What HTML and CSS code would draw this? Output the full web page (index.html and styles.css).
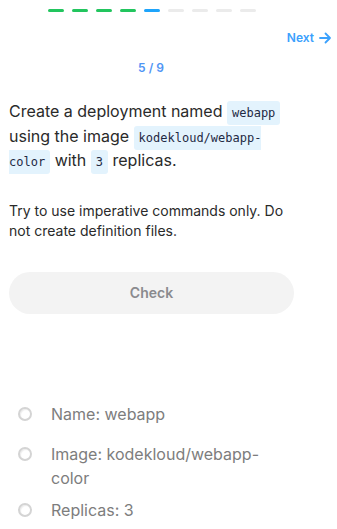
FILE: index.html
```html
<!DOCTYPE html>
<html>
<head>
<meta charset="utf-8">
<link rel="stylesheet" href="styles.css">
</head>
<body>
<div class="page">
  <div class="progress">
    <span class="seg done"></span><span class="seg done"></span><span class="seg done"></span><span class="seg done"></span><span class="seg current"></span><span class="seg"></span><span class="seg"></span><span class="seg"></span><span class="seg"></span>
  </div>
  <div class="nav">
    <a class="next">Next <svg width="14" height="14" viewBox="0 0 14 14"><path d="M2 7h10M7.5 2.5L12 7l-4.5 4.5" fill="none" stroke="currentColor" stroke-width="1.8" stroke-linecap="round" stroke-linejoin="round"/></svg></a>
  </div>
  <div class="main">
    <div class="counter">5 / 9</div>
    <p class="question">Create a deployment named <code>webapp</code> using the image <code>kodekloud/webapp-color</code> with <code>3</code> replicas.</p>
    <p class="hint">Try to use imperative commands only. Do not create definition files.</p>
    <button class="check">Check</button>
    <ul class="tasks">
      <li><span class="radio"></span><span class="label">Name: webapp</span></li>
      <li><span class="radio"></span><span class="label">Image: kodekloud/webapp-color</span></li>
      <li><span class="radio"></span><span class="label">Replicas: 3</span></li>
    </ul>
  </div>
</div>
</body>
</html>
```
FILE: styles.css
```css
* { box-sizing: border-box; }
html, body { margin: 0; padding: 0; background: #fff; }
body { font-family: Inter, "Noto Sans", sans-serif; color: #2b2b2b; }
.page { width: 337px; }
.progress {
  display: flex;
  gap: 8px;
  padding-left: 48px;
  padding-top: 9px;
  height: 12px;
}
.seg { width: 16px; height: 3px; border-radius: 2px; background: #ebebeb; }
.seg.done { background: #22c55e; }
.seg.current { background: #1ea4fb; }
.nav {
  display: flex;
  justify-content: flex-end;
  padding: 16px 5px 0 0;
  height: 35px;
}
.next {
  display: flex;
  align-items: center;
  gap: 4px;
  color: #3ba1fd;
  font-size: 12px;
  font-weight: 600;
}
.main { padding-left: 9px; width: 293px; }
.counter {
  text-align: center;
  color: #4f95f5;
  font-size: 12px;
  font-weight: 600;
  padding-top: 13px;
  height: 52px;
}
.question {
  margin: 0;
  font-size: 16px;
  line-height: 24.5px;
  color: #2a2a2a;
}
code {
  font-family: "DejaVu Sans Mono", monospace;
  font-size: 12px;
  line-height: 1;
  background: #e3f3fd;
  color: #1f2a44;
  padding: 5px 5px;
  border-radius: 3px;
}
.hint {
  margin: 28px 0 0;
  font-size: 14px;
  line-height: 20px;
  color: #2a2a2a;
}
.check {
  display: block;
  width: 285px;
  height: 42px;
  margin-top: 31px;
  border: none;
  border-radius: 21px;
  background: #f3f3f3;
  color: #8a8a8e;
  font-family: Inter, "Noto Sans", sans-serif;
  font-size: 14px;
  font-weight: 600;
}
.tasks {
  list-style: none;
  margin: 88px 0 0;
  padding: 0;
  display: flex;
  flex-direction: column;
  gap: 8px;
}
.tasks li {
  display: flex;
  align-items: flex-start;
  gap: 19px;
  min-height: 32px;
  font-size: 16px;
  line-height: 24px;
  color: #7d7d7d;
}
.radio {
  flex: none;
  width: 14px;
  height: 14px;
  margin: 5px 0 0 9px;
  border-radius: 50%;
  border: 2px solid #d4d4d4;
  background: #fff;
  box-shadow: inset 1px 1px 1px rgba(0,0,0,0.08);
}
.label { width: 215px; }
```
